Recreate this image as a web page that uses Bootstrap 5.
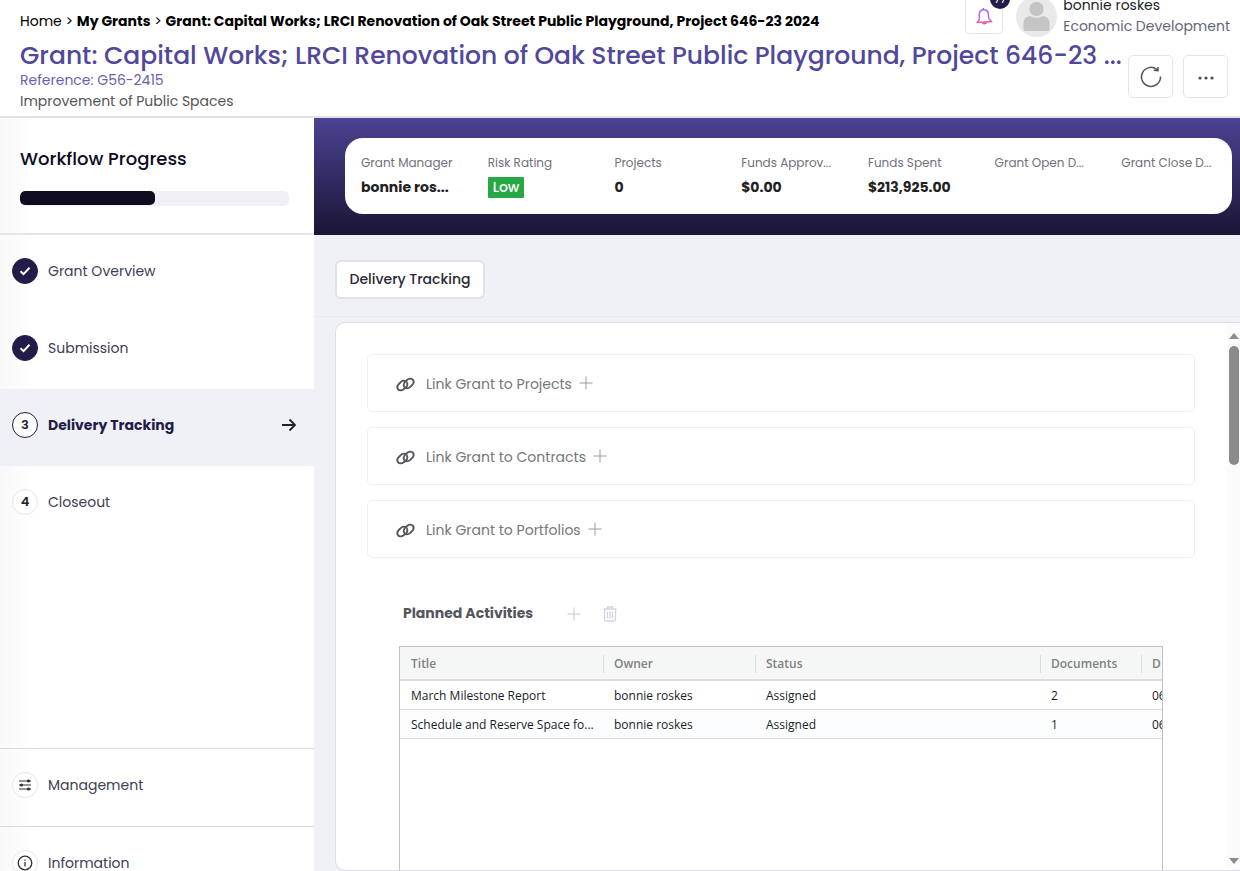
<!DOCTYPE html>
<html lang="en">
<head>
<meta charset="utf-8">
<meta name="viewport" content="width=device-width, initial-scale=1">
<title>Grant: Delivery Tracking</title>
<link href="https://cdn.jsdelivr.net/npm/bootstrap@5.3.0/dist/css/bootstrap.min.css" rel="stylesheet">
<style>
body { font-family: Poppins, Inter, "Liberation Sans", sans-serif; font-size: 14px; line-height: 20px; color: #212529; background: #fff; }
a { color: inherit; text-decoration: none; }
.page-head { border-bottom: 2px solid #e2e2e4; height: 118px; padding-left: 20px; }
.top-row { height: 38px; padding-right: 10px; }
.crumbs { font-size: 14px; padding-top: 11px; color: #000; }
.crumbs .trail { font-weight: 700; }
.bell-btn { width: 38px; height: 44px; border: 1px solid #e4e4ec; border-radius: 5px; margin-bottom: 4px; margin-right: 13px; background: #fff; }
.bell-count { position: absolute; top: -2px; left: 24px; width: 20px; height: 20px; line-height: 20px; border-radius: 50%; background: #231c48; color: #fff; font-size: 11px; }
.avatar { width: 41px; height: 41px; margin-right: 6px; margin-bottom: 1px; }
.who { line-height: 21px; padding-bottom: 1px; }
.who .dept { color: #666476; }
.grant-title { font-size: 25px; line-height: 31px; font-weight: 500; color: #51479b; margin: 0; padding-top: 2px; }
.grant-ref { color: #6a5fb0; line-height: 18px; }
.grant-sub { color: #555; line-height: 24px; }
.head-tools { padding: 17px 12px 0 5px; gap: 10px; }
.tool-btn { width: 45px; height: 43px; border: 1px solid #e4e4ec; border-radius: 5px; background: #fff; padding: 0; }
.side { width: 314px; background: linear-gradient(90deg, #f9f9f9, #fff 36px); }
.side-progress { height: 117px; padding: 29px 25px 0 20px; border-bottom: 2px solid #e6e6e9; }
.side-progress h2 { font-size: 18px; line-height: 24px; color: #0d0b1e; margin: 0 0 20px; font-weight: 500; }
.progress.wf { height: 15px; border-radius: 5px; background: #efeff5; }
.wf .progress-bar { background: #0f0b20; border-radius: 5px; height: 14px; }
.step { height: 77px; padding: 0 16px 6px 12px; color: #3f3c55; }
.step.current { background: #f0f1f7; color: #231c48; font-weight: 700; }
.dot { width: 26px; height: 26px; border-radius: 50%; border: 1px solid #e6e6e9; background: #fff; margin-right: 10px; color: #222; font-weight: 600; font-size: 13px; }
.dot.done { background: #231c48; border-color: #231c48; }
.current .dot { border-color: #231c48; }
.side-foot { height: 123px; }
.side-foot .step { border-top: 1px solid #d9d9dc; height: 78px; flex-shrink: 0; }
.work { background: #f0f1f7; }
.banner { background: linear-gradient(#4b4292, #1a1535); padding: 20px 8px 21px 31px; }
.facts { background: #fff; border-radius: 18px; height: 76px; }
.fact { flex: 1 1 0; padding: 15px 0 0 16px; white-space: nowrap; }
.fact dt { font-size: 12px; line-height: 20px; font-weight: 400; color: #72707b; }
.fact dd { margin: 4px 0 0; font-size: 14px; line-height: 20px; font-weight: 700; color: #222; }
.low { display: inline-block; background: #28a745; color: #fff; border-radius: 1px; padding: 0 5px; font-weight: 500; line-height: 21px; }
.tabs { height: 82px; padding: 25px 20px 0 21px; border-bottom: 1px solid #e9eaf0; }
.tab-btn { height: 39px; width: 150px; border: 2px solid #e1e1e8; border-radius: 6px; background: #fff; font-weight: 500; color: #2a2933; padding: 0 0 1px; }
.panel { margin: 5px 0 0 21px; background: #fff; border: 1px solid #dddde3; border-right: 0; border-radius: 10px 0 0 10px; }
.panel-body { padding: 31px 32px 0 31px; }
.link-box { height: 58px; border: 1px solid #efeff5; border-radius: 5px; padding: 2px 0 0 28px; margin-bottom: 15px; color: #76767b; }
.link-icon { margin-right: 11px; color: #55555b; }
.bare { border: 0; background: none; padding: 0; display: flex; }
.link-box .bare { margin-left: 7px; padding-bottom: 2px; color: #9a9aa5; }
.act-head { padding: 30px 0 0 36px; height: 73px; }
.act-head h3 { font-size: 14px; line-height: 20px; font-weight: 700; color: #56555d; margin: 0; }
.act-tools { gap: 22px; padding: 0 0 0 34px; height: 21px; }
.grid-wrap { margin: 0 32px; border: 1px solid #bdc3c7; border-bottom: 0; overflow: hidden; font-family: "Segoe UI", "Open Sans", sans-serif; }
.grid-tbl { table-layout: fixed; width: 850px; border-collapse: separate; border-spacing: 0; font-size: 12px; line-height: 16px; color: #181d1f; white-space: nowrap; }
.grid-tbl th { height: 34px; padding: 2px 0 0; background: #f5f7f7; color: #7f8182; font-weight: 600; border-bottom: 2px solid #dadde0; }
.grid-tbl th span { display: block; padding-left: 10px; line-height: 18px; border-left: 1px solid #d9dcde; }
.grid-tbl th:first-child span { border-color: transparent; }
.grid-tbl td { height: 29px; padding: 2px 0 0 11px; border-bottom: 1px solid #d9dcde; }
.grid-tbl tr:nth-child(2) td { background: #fcfdfe; }
.scroller { width: 13px; background: #fbfbfb; padding: 10px 1px 6px 2px; }
.thumb { width: 10px; height: 119px; border-radius: 5px; background: #8b8b8b; margin-top: 7px; }
</style>
</head>
<body class="vh-100 d-flex flex-column overflow-hidden">
<svg width="0" height="0" class="position-absolute" aria-hidden="true">
  <defs>
    <symbol id="chain" viewBox="0 0 20 16"><g fill="none" stroke="currentColor" stroke-width="2"><path d="M11.500 5.800C10.500 3.500 7.500 3.200 5.200 5.200L3.400 6.900C1.300 8.800 .8 11.200 2 12.900s3.800 1.900 5.700.5l1.600-1.400"/><path d="M8.500 10.200c1 2.300 4 2.600 6.300.6l1.800-1.700c2.100-1.900 2.600-4.300 1.400-6s-3.800-1.900-5.700-.5l-1.900 1.600C8.400 5.900 7.600 8.100 8.500 10.200z"/><path d="M11.500 5.800c.9 2 .3 4.400-1.600 6"/></g></symbol>
    <symbol id="plus" viewBox="0 0 14 14"><path d="M7 .5v13M.5 7h13" fill="none" stroke="currentColor" stroke-width="1"/></symbol>
    <symbol id="tick" viewBox="0 0 12 10"><path d="M1.500 5.300l3 2.900 6-6.400" fill="none" stroke="#fff" stroke-width="2"/></symbol>
  </defs>
</svg>
<header class="page-head flex-shrink-0">
  <div class="top-row d-flex justify-content-between">
    <nav class="crumbs text-nowrap" aria-label="Breadcrumb"><a href="#">Home</a> &gt; <a href="#" class="trail">My Grants</a> &gt; <span class="trail">Grant: Capital Works; LRCI Renovation of Oak Street Public Playground, Project 646-23 2024</span></nav>
    <div class="d-flex align-items-end text-nowrap">
      <button class="bell-btn position-relative p-0 pt-2" aria-label="Notifications">
        <svg width="18" height="20" viewBox="0 0 18 20"><defs><linearGradient id="bellfill" x1="0" y1="0" x2="0" y2="20" gradientUnits="userSpaceOnUse"><stop offset="0" stop-color="#a45cf5"/><stop offset=".5" stop-color="#c565e8"/><stop offset="1" stop-color="#f0506a"/></linearGradient></defs><g fill="none" stroke="url(#bellfill)" stroke-width="1.500" transform="rotate(-4 9 10)"><path d="M9 2.800c-3 0-4.600 2-4.600 5v3.200c0 1.700-1.500 2.600-2.400 4h14c-.9-1.400-2.400-2.300-2.400-4V7.800c0-3-1.600-5-4.600-5zM9 2.800V1M7.200 15.200c.2 2.200 3.400 2.200 3.600 0"/></g></svg>
        <span class="bell-count">77</span>
      </button>
      <svg class="avatar" viewBox="0 0 41 41"><circle cx="20.500" cy="20.500" r="20.500" fill="#e9e9e9"/><path d="M7.500 33v-6c0-4 3-7 7-7 3 2.500 9 2.500 12 0 4 0 7 3 7 7v6q0 2-2 2h-22q-2 0-2-2z" fill="#c4c4c4"/><circle cx="20.500" cy="13" r="7.600" fill="#c4c4c4" stroke="#e9e9e9" stroke-width="1"/></svg>
      <div class="who"><div>bonnie roskes</div><div class="dept">Economic Development</div></div>
    </div>
  </div>
  <div class="d-flex justify-content-between">
    <div class="text-nowrap overflow-hidden">
      <h1 class="grant-title">Grant: Capital Works; LRCI Renovation of Oak Street Public Playground, Project 646-23 ...</h1>
      <div class="grant-ref">Reference: G56-2415</div>
      <div class="grant-sub">Improvement of Public Spaces</div>
    </div>
    <div class="head-tools d-flex flex-shrink-0">
      <button class="tool-btn" aria-label="Refresh"><svg width="22" height="22" viewBox="0 0 22 22" fill="none" stroke="#55525f" stroke-width="1.500"><path d="M20.500 10.500a9.500 9.500 0 1 1-3.500-7M13.800 4.300l4.200.3V1"/></svg></button>
      <button class="tool-btn" aria-label="More"><svg width="16" height="4" viewBox="0 0 16 4" fill="#4a4757"><circle cx="2" cy="2" r="1.600"/><circle cx="8" cy="2" r="1.600"/><circle cx="14" cy="2" r="1.600"/></svg></button>
    </div>
  </div>
</header>
<div class="d-flex flex-grow-1 overflow-hidden">
  <aside class="side d-flex flex-column flex-shrink-0 overflow-hidden">
    <section class="side-progress flex-shrink-0">
      <h2>Workflow Progress</h2>
      <div class="progress wf" role="progressbar" aria-label="Workflow progress" aria-valuenow="50" aria-valuemin="0" aria-valuemax="100"><div class="progress-bar" style="width:50%"></div></div>
    </section>
    <nav class="flex-grow-1 overflow-hidden" aria-label="Workflow">
      <a href="#" class="step d-flex align-items-center"><span class="dot done d-flex align-items-center justify-content-center"><svg width="12" height="10"><use href="#tick"/></svg></span>Grant Overview</a>
      <a href="#" class="step d-flex align-items-center"><span class="dot done d-flex align-items-center justify-content-center"><svg width="12" height="10"><use href="#tick"/></svg></span>Submission</a>
      <a href="#" class="step current d-flex align-items-center"><span class="dot d-flex align-items-center justify-content-center">3</span>Delivery Tracking<svg class="ms-auto" width="18" height="14" viewBox="0 0 18 14" fill="none" stroke="#222" stroke-width="1.800"><path d="M2 7h13M9.500 1.500L15 7l-5.500 5.500"/></svg></a>
      <a href="#" class="step d-flex align-items-center"><span class="dot d-flex align-items-center justify-content-center">4</span>Closeout</a>
    </nav>
    <div class="side-foot d-flex flex-column flex-shrink-0 overflow-hidden">
      <a href="#" class="step d-flex align-items-center"><span class="dot d-flex align-items-center justify-content-center"><svg width="12" height="12" viewBox="0 0 12 12" fill="#333" stroke="#333" stroke-width="1.200"><path d="M0 2h12M0 6h12M0 10h12"/><circle cx="9.500" cy="2" r="1"/><circle cx="2.500" cy="6" r="1"/><circle cx="9.500" cy="10" r="1"/></svg></span>Management</a>
      <a href="#" class="step d-flex align-items-center"><span class="dot d-flex align-items-center justify-content-center"><svg width="16" height="16" viewBox="0 0 16 16" fill="none" stroke="#333" stroke-width="1.300"><circle cx="8" cy="8" r="6.800"/><path d="M8 7v4.500M8 4.500v1.300"/></svg></span>Information</a>
    </div>
  </aside>
  <main class="work flex-grow-1 d-flex flex-column overflow-hidden">
    <div class="banner flex-shrink-0">
      <dl class="facts d-flex m-0">
        <div class="fact"><dt>Grant Manager</dt><dd>bonnie ros...</dd></div>
        <div class="fact"><dt>Risk Rating</dt><dd><span class="low">Low</span></dd></div>
        <div class="fact"><dt>Projects</dt><dd>0</dd></div>
        <div class="fact"><dt>Funds Approv...</dt><dd>$0.00</dd></div>
        <div class="fact"><dt>Funds Spent</dt><dd>$213,925.00</dd></div>
        <div class="fact"><dt>Grant Open D...</dt><dd></dd></div>
        <div class="fact"><dt>Grant Close D...</dt><dd></dd></div>
      </dl>
    </div>
    <div class="tabs flex-shrink-0"><button class="tab-btn">Delivery Tracking</button></div>
    <div class="panel flex-grow-1 d-flex overflow-hidden">
      <div class="panel-body d-flex flex-column flex-grow-1 overflow-hidden">
        <div class="link-box flex-shrink-0 d-flex align-items-center"><svg class="link-icon" width="19" height="15"><use href="#chain"/></svg>Link Grant to Projects<button class="bare" aria-label="Link project"><svg width="14" height="14"><use href="#plus"/></svg></button></div>
        <div class="link-box flex-shrink-0 d-flex align-items-center"><svg class="link-icon" width="19" height="15"><use href="#chain"/></svg>Link Grant to Contracts<button class="bare" aria-label="Link contract"><svg width="14" height="14"><use href="#plus"/></svg></button></div>
        <div class="link-box flex-shrink-0 d-flex align-items-center"><svg class="link-icon" width="19" height="15"><use href="#chain"/></svg>Link Grant to Portfolios<button class="bare" aria-label="Link portfolio"><svg width="14" height="14"><use href="#plus"/></svg></button></div>
        <div class="act-head d-flex align-items-start flex-shrink-0">
          <h3>Planned Activities</h3>
          <div class="act-tools d-flex align-items-center">
            <button class="bare" aria-label="Add activity"><svg width="14" height="14" color="#c6c6d6"><use href="#plus"/></svg></button>
            <button class="bare" aria-label="Delete activity"><svg width="14" height="16" viewBox="0 0 14 16" fill="none" stroke="#d3d3df" stroke-width="1.300"><path d="M.5 3h13M4.500 3V1h5v2M1.500 3v10.500q0 1.500 1.500 1.500h8q1.500 0 1.500-1.500V3M4.500 5.500v7M7 5.500v7M9.500 5.500v7"/></svg></button>
          </div>
        </div>
        <div class="grid-wrap flex-grow-1">
          <table class="grid-tbl">
            <colgroup><col style="width:203px"><col style="width:152px"><col style="width:285px"><col style="width:101px"><col></colgroup>
            <thead><tr><th scope="col"><span>Title</span></th><th scope="col"><span>Owner</span></th><th scope="col"><span>Status</span></th><th scope="col"><span>Documents</span></th><th scope="col"><span>D</span></th></tr></thead>
            <tbody>
              <tr><td>March Milestone Report</td><td>bonnie roskes</td><td>Assigned</td><td>2</td><td>06</td></tr>
              <tr><td>Schedule and Reserve Space fo...</td><td>bonnie roskes</td><td>Assigned</td><td>1</td><td>06</td></tr>
            </tbody>
          </table>
        </div>
      </div>
      <div class="scroller d-flex flex-column flex-shrink-0" aria-hidden="true">
        <svg width="10" height="6" viewBox="0 0 10 6"><path d="M0 6l5-6 5 6z" fill="#8b8b8b"/></svg>
        <div class="thumb"></div>
        <svg class="mt-auto" width="10" height="6" viewBox="0 0 10 6"><path d="M0 0l5 6 5-6z" fill="#8b8b8b"/></svg>
      </div>
    </div>
  </main>
</div>
<script src="https://cdn.jsdelivr.net/npm/bootstrap@5.3.0/dist/js/bootstrap.bundle.min.js"></script>
</body>
</html>
